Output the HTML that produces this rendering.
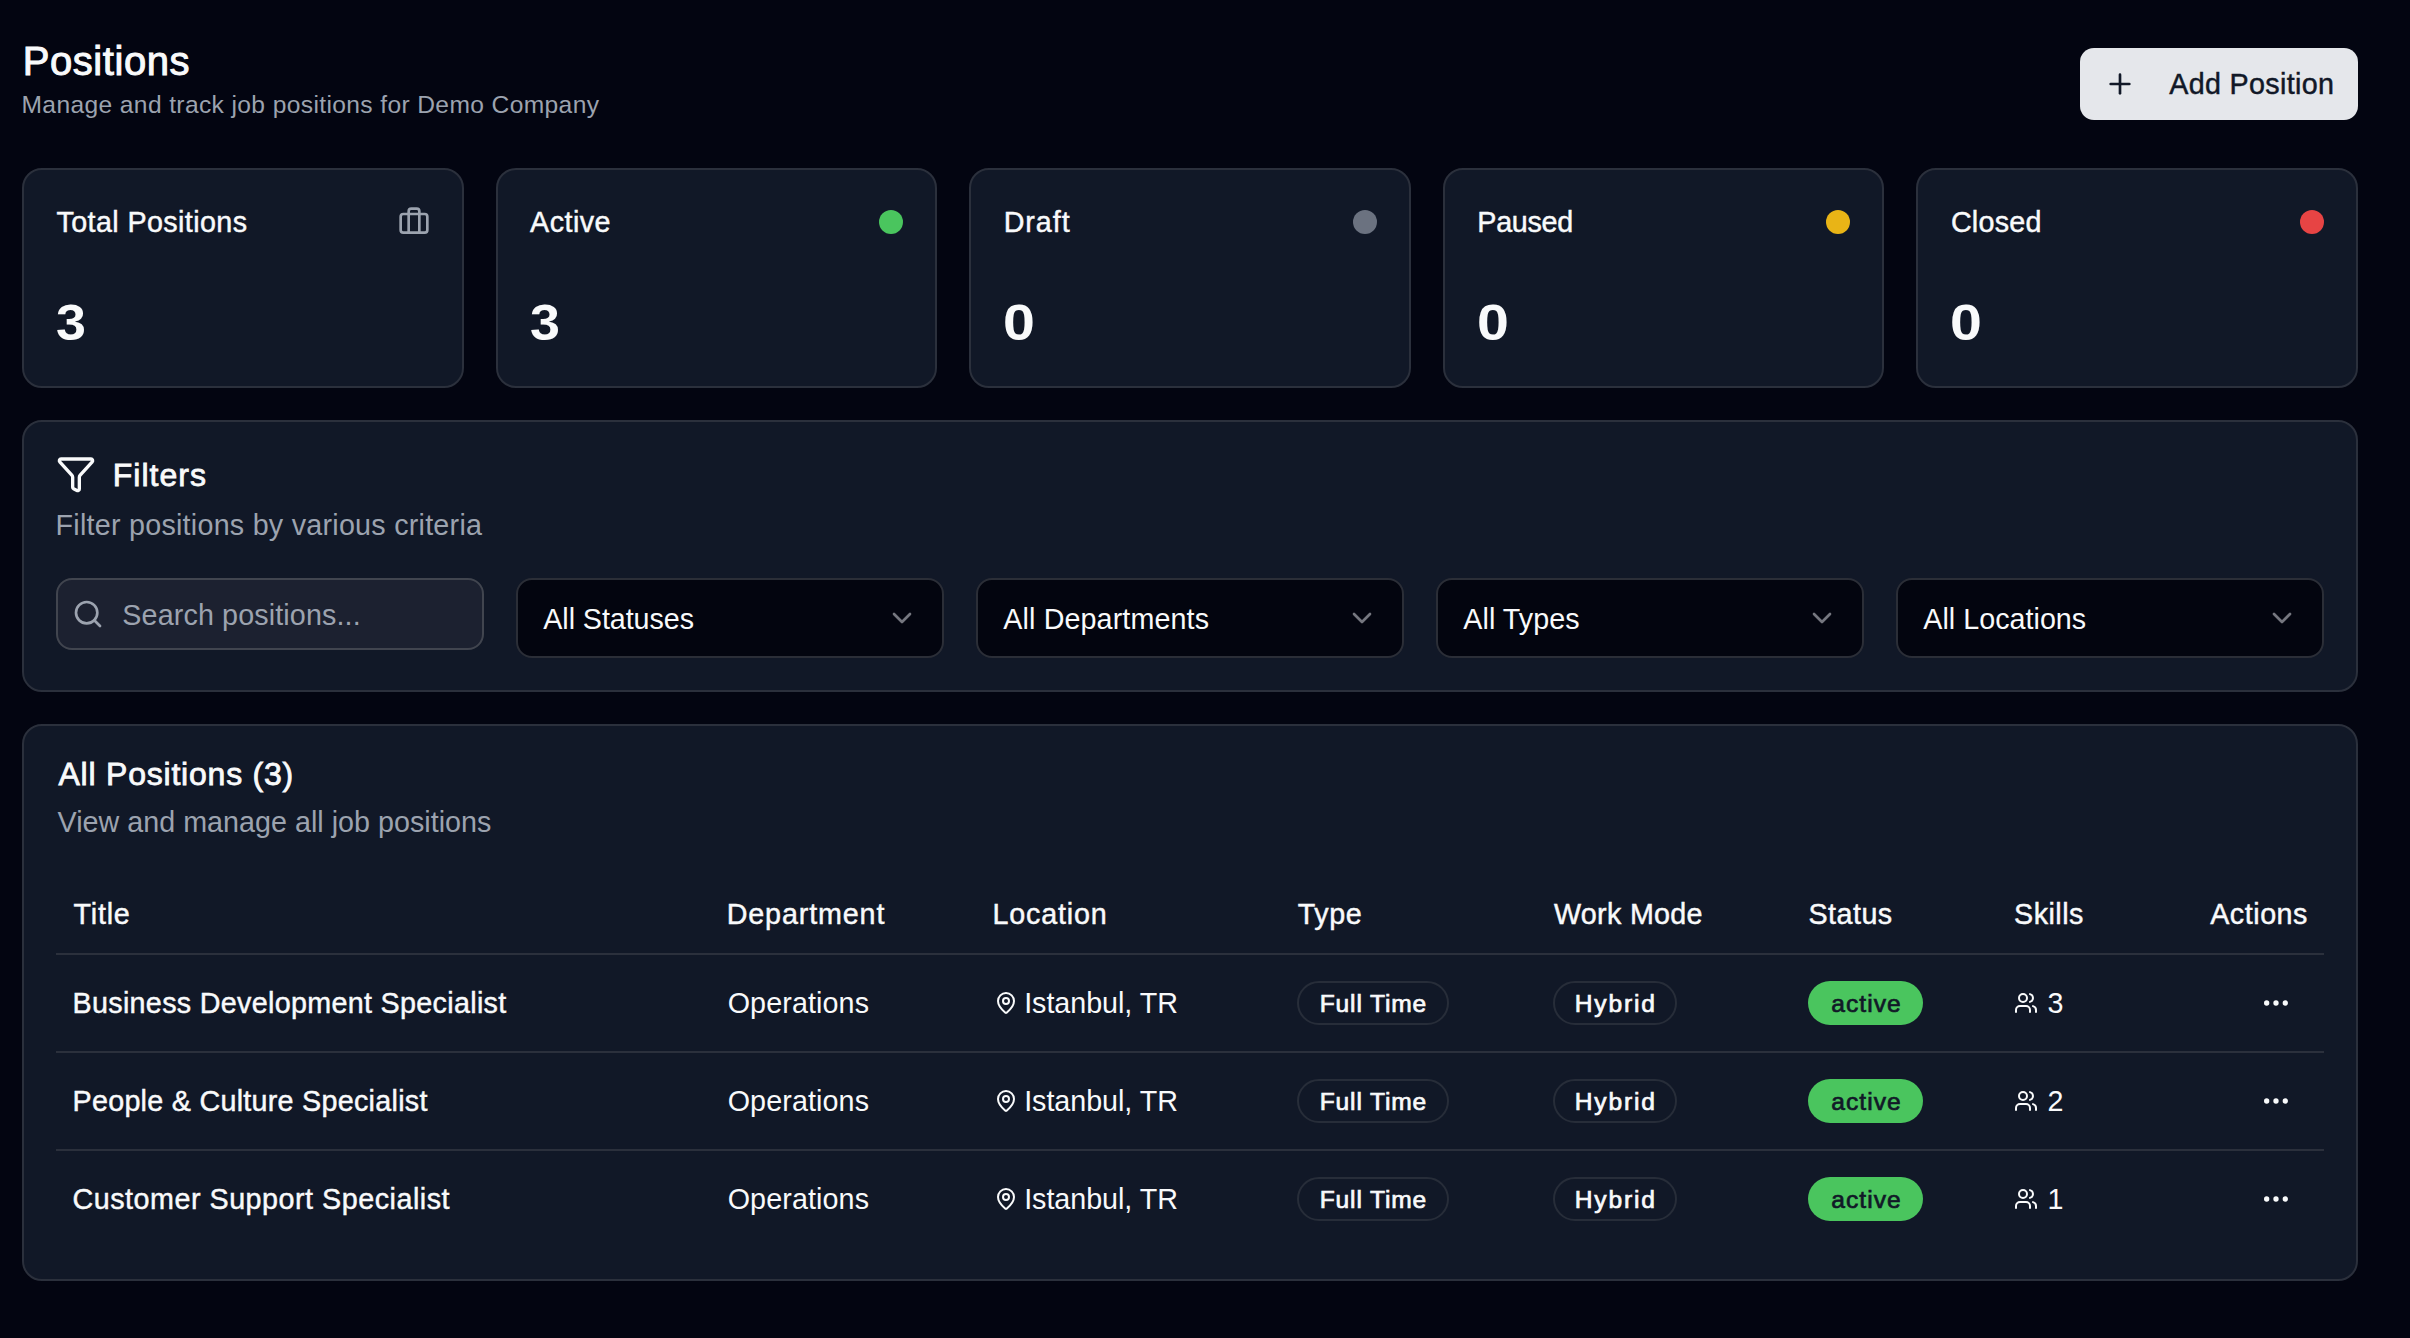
<!DOCTYPE html>
<html><head><meta charset="utf-8"><title>Positions</title>
<style>
html,body{margin:0;padding:0;}
body{width:2410px;height:1338px;background:#030511;position:relative;overflow:hidden;font-family:"Liberation Sans",sans-serif;}
.t{position:absolute;white-space:nowrap;line-height:1;}
svg{display:block;}
</style></head><body>
<div class="t" style="left:22.8px;top:41.1px;font-size:40px;letter-spacing:0.550px;color:#f9fafb;-webkit-text-stroke:1.0px #f9fafb;">Positions</div>
<div class="t" style="left:21.5px;top:93.2px;font-size:24.6px;letter-spacing:0.370px;color:#9ca3af;">Manage and track job positions for Demo Company</div>
<div style="position:absolute;left:2080.0px;top:48.0px;width:278.0px;height:72.0px;box-sizing:border-box;background:#e5e7eb;border-radius:14px;"></div>
<svg style="position:absolute;left:2104.0px;top:68.0px;" width="32" height="32" viewBox="0 0 24 24" fill="none" stroke="#111827" stroke-width="2" stroke-linecap="round" stroke-linejoin="round"><path d="M5 12h14"/><path d="M12 5v14"/></svg>
<div class="t" style="left:2169.2px;top:70.1px;font-size:28.7px;letter-spacing:0.340px;color:#111827;-webkit-text-stroke:0.45px #111827;">Add Position</div>
<div style="position:absolute;left:22.0px;top:168.0px;width:441.6px;height:220.0px;box-sizing:border-box;background:#111827;border:2px solid #2b303c;border-radius:20px;"></div>
<div class="t" style="left:56.5px;top:207.5px;font-size:28.7px;letter-spacing:0.400px;color:#f9fafb;-webkit-text-stroke:0.45px #f9fafb;">Total Positions</div>
<div class="t" style="left:56.0px;top:297.7px;font-size:50.3px;font-weight:700;color:#f9fafb;transform:scaleX(1.07);transform-origin:0 0;">3</div>
<svg style="position:absolute;left:398.0px;top:206.0px;" width="32" height="32" viewBox="0 0 24 24" fill="none" stroke="#9ca3af" stroke-width="2" stroke-linecap="round" stroke-linejoin="round"><path d="M16 20V4a2 2 0 0 0-2-2h-4a2 2 0 0 0-2 2v16"/><rect width="20" height="14" x="2" y="6" rx="2"/></svg>
<div style="position:absolute;left:495.6px;top:168.0px;width:441.6px;height:220.0px;box-sizing:border-box;background:#111827;border:2px solid #2b303c;border-radius:20px;"></div>
<div class="t" style="left:530.1px;top:207.5px;font-size:28.7px;letter-spacing:0.450px;color:#f9fafb;-webkit-text-stroke:0.45px #f9fafb;">Active</div>
<div class="t" style="left:529.6px;top:297.7px;font-size:50.3px;font-weight:700;color:#f9fafb;transform:scaleX(1.07);transform-origin:0 0;">3</div>
<div style="position:absolute;left:879.2px;top:210.0px;width:24.0px;height:24.0px;box-sizing:border-box;background:#4ac55e;border-radius:50%;"></div>
<div style="position:absolute;left:969.2px;top:168.0px;width:441.6px;height:220.0px;box-sizing:border-box;background:#111827;border:2px solid #2b303c;border-radius:20px;"></div>
<div class="t" style="left:1003.7px;top:207.5px;font-size:28.7px;letter-spacing:0.950px;color:#f9fafb;-webkit-text-stroke:0.45px #f9fafb;">Draft</div>
<div class="t" style="left:1003.2px;top:297.7px;font-size:50.3px;font-weight:700;color:#f9fafb;transform:scaleX(1.14);transform-origin:0 0;">0</div>
<div style="position:absolute;left:1352.8px;top:210.0px;width:24.0px;height:24.0px;box-sizing:border-box;background:#6b7280;border-radius:50%;"></div>
<div style="position:absolute;left:1442.8px;top:168.0px;width:441.6px;height:220.0px;box-sizing:border-box;background:#111827;border:2px solid #2b303c;border-radius:20px;"></div>
<div class="t" style="left:1477.3px;top:207.5px;font-size:28.7px;letter-spacing:-0.300px;color:#f9fafb;-webkit-text-stroke:0.45px #f9fafb;">Paused</div>
<div class="t" style="left:1476.8px;top:297.7px;font-size:50.3px;font-weight:700;color:#f9fafb;transform:scaleX(1.14);transform-origin:0 0;">0</div>
<div style="position:absolute;left:1826.4px;top:210.0px;width:24.0px;height:24.0px;box-sizing:border-box;background:#e9b416;border-radius:50%;"></div>
<div style="position:absolute;left:1916.4px;top:168.0px;width:441.6px;height:220.0px;box-sizing:border-box;background:#111827;border:2px solid #2b303c;border-radius:20px;"></div>
<div class="t" style="left:1950.9px;top:207.5px;font-size:28.7px;letter-spacing:0.250px;color:#f9fafb;-webkit-text-stroke:0.45px #f9fafb;">Closed</div>
<div class="t" style="left:1950.4px;top:297.7px;font-size:50.3px;font-weight:700;color:#f9fafb;transform:scaleX(1.14);transform-origin:0 0;">0</div>
<div style="position:absolute;left:2300.0px;top:210.0px;width:24.0px;height:24.0px;box-sizing:border-box;background:#e74444;border-radius:50%;"></div>
<div style="position:absolute;left:22.0px;top:420.0px;width:2336.0px;height:272.0px;box-sizing:border-box;background:#111827;border:2px solid #2b303c;border-radius:20px;"></div>
<svg style="position:absolute;left:56.0px;top:454.0px;" width="40" height="40" viewBox="0 0 24 24" fill="none" stroke="#f9fafb" stroke-width="2" stroke-linecap="round" stroke-linejoin="round"><path d="M10 20a1 1 0 0 0 .553.895l2 1A1 1 0 0 0 14 21v-7a2 2 0 0 1 .517-1.341L21.74 4.67A1 1 0 0 0 21 3H3a1 1 0 0 0-.742 1.67l7.225 7.989A2 2 0 0 1 10 14z"/></svg>
<div class="t" style="left:112.8px;top:458.9px;font-size:32px;letter-spacing:1.000px;color:#f9fafb;-webkit-text-stroke:0.8px #f9fafb;">Filters</div>
<div class="t" style="left:55.5px;top:511.2px;font-size:28.7px;letter-spacing:0.250px;color:#9ca3af;">Filter positions by various criteria</div>
<div style="position:absolute;left:56.0px;top:578.0px;width:428.0px;height:72.0px;box-sizing:border-box;background:#1c2130;border:2px solid #41454f;border-radius:16px;"></div>
<svg style="position:absolute;left:72.0px;top:598.0px;" width="32" height="32" viewBox="0 0 24 24" fill="none" stroke="#9ca3af" stroke-width="2" stroke-linecap="round" stroke-linejoin="round"><circle cx="11" cy="11" r="8"/><path d="m21 21-4.3-4.3"/></svg>
<div class="t" style="left:122.3px;top:600.5px;font-size:28.7px;letter-spacing:0.130px;color:#9ca3af;">Search positions...</div>
<div style="position:absolute;left:516.0px;top:578.0px;width:428.0px;height:80.0px;box-sizing:border-box;background:#03050f;border:2px solid #2b2e37;border-radius:16px;"></div>
<div class="t" style="left:543.3px;top:605.0px;font-size:28.7px;letter-spacing:-0.070px;color:#f9fafb;">All Statuses</div>
<svg style="position:absolute;left:886.0px;top:602.0px;" width="32" height="32" viewBox="0 0 24 24" fill="none" stroke="#75777f" stroke-width="2" stroke-linecap="round" stroke-linejoin="round"><path d="m6 9 6 6 6-6"/></svg>
<div style="position:absolute;left:976.0px;top:578.0px;width:428.0px;height:80.0px;box-sizing:border-box;background:#03050f;border:2px solid #2b2e37;border-radius:16px;"></div>
<div class="t" style="left:1003.3px;top:605.0px;font-size:28.7px;letter-spacing:0.120px;color:#f9fafb;">All Departments</div>
<svg style="position:absolute;left:1346.0px;top:602.0px;" width="32" height="32" viewBox="0 0 24 24" fill="none" stroke="#75777f" stroke-width="2" stroke-linecap="round" stroke-linejoin="round"><path d="m6 9 6 6 6-6"/></svg>
<div style="position:absolute;left:1436.0px;top:578.0px;width:428.0px;height:80.0px;box-sizing:border-box;background:#03050f;border:2px solid #2b2e37;border-radius:16px;"></div>
<div class="t" style="left:1463.3px;top:605.0px;font-size:28.7px;letter-spacing:0.050px;color:#f9fafb;">All Types</div>
<svg style="position:absolute;left:1806.0px;top:602.0px;" width="32" height="32" viewBox="0 0 24 24" fill="none" stroke="#75777f" stroke-width="2" stroke-linecap="round" stroke-linejoin="round"><path d="m6 9 6 6 6-6"/></svg>
<div style="position:absolute;left:1896.0px;top:578.0px;width:428.0px;height:80.0px;box-sizing:border-box;background:#03050f;border:2px solid #2b2e37;border-radius:16px;"></div>
<div class="t" style="left:1923.3px;top:605.0px;font-size:28.7px;letter-spacing:0.020px;color:#f9fafb;">All Locations</div>
<svg style="position:absolute;left:2266.0px;top:602.0px;" width="32" height="32" viewBox="0 0 24 24" fill="none" stroke="#75777f" stroke-width="2" stroke-linecap="round" stroke-linejoin="round"><path d="m6 9 6 6 6-6"/></svg>
<div style="position:absolute;left:22.0px;top:724.0px;width:2336.0px;height:557.0px;box-sizing:border-box;background:#111827;border:2px solid #2b303c;border-radius:20px;"></div>
<div class="t" style="left:58.5px;top:758.4px;font-size:32px;letter-spacing:0.780px;color:#f9fafb;-webkit-text-stroke:0.8px #f9fafb;">All Positions (3)</div>
<div class="t" style="left:57.5px;top:807.9px;font-size:28.7px;letter-spacing:0.020px;color:#9ca3af;">View and manage all job positions</div>
<div class="t" style="left:73.6px;top:899.7px;font-size:28.7px;letter-spacing:0.770px;color:#f9fafb;-webkit-text-stroke:0.45px #f9fafb;">Title</div>
<div class="t" style="left:726.7px;top:899.7px;font-size:28.7px;letter-spacing:0.870px;color:#f9fafb;-webkit-text-stroke:0.45px #f9fafb;">Department</div>
<div class="t" style="left:992.5px;top:899.7px;font-size:28.7px;letter-spacing:0.810px;color:#f9fafb;-webkit-text-stroke:0.45px #f9fafb;">Location</div>
<div class="t" style="left:1297.7px;top:899.7px;font-size:28.7px;letter-spacing:0.600px;color:#f9fafb;-webkit-text-stroke:0.45px #f9fafb;">Type</div>
<div class="t" style="left:1554.0px;top:899.7px;font-size:28.7px;letter-spacing:0.300px;color:#f9fafb;-webkit-text-stroke:0.45px #f9fafb;">Work Mode</div>
<div class="t" style="left:1808.4px;top:899.7px;font-size:28.7px;letter-spacing:0.500px;color:#f9fafb;-webkit-text-stroke:0.45px #f9fafb;">Status</div>
<div class="t" style="left:2014.0px;top:899.7px;font-size:28.7px;letter-spacing:0.500px;color:#f9fafb;-webkit-text-stroke:0.45px #f9fafb;">Skills</div>
<div class="t" style="left:2210.2px;top:899.7px;font-size:28.7px;letter-spacing:0.530px;color:#f9fafb;-webkit-text-stroke:0.45px #f9fafb;">Actions</div>
<div style="position:absolute;left:56.0px;top:953.0px;width:2268.0px;height:2.0px;box-sizing:border-box;background:#2b303c;"></div>
<div style="position:absolute;left:56.0px;top:1051.0px;width:2268.0px;height:2.0px;box-sizing:border-box;background:#2b303c;"></div>
<div class="t" style="left:72.5px;top:988.9px;font-size:28.7px;letter-spacing:0.320px;color:#f9fafb;-webkit-text-stroke:0.45px #f9fafb;">Business Development Specialist</div>
<div class="t" style="left:727.7px;top:988.9px;font-size:28.7px;letter-spacing:0.110px;color:#f9fafb;">Operations</div>
<svg style="position:absolute;left:993.7px;top:991.0px;" width="24" height="24" viewBox="0 0 24 24" fill="none" stroke="#f9fafb" stroke-width="2" stroke-linecap="round" stroke-linejoin="round"><path d="M20 10c0 4.993-5.539 10.193-7.399 11.799a1 1 0 0 1-1.202 0C9.539 20.193 4 14.993 4 10a8 8 0 0 1 16 0"/><circle cx="12" cy="10" r="3"/></svg>
<div class="t" style="left:1024.2px;top:988.9px;font-size:28.7px;letter-spacing:-0.040px;color:#f9fafb;">Istanbul, TR</div>
<div style="position:absolute;left:1297.0px;top:981.0px;width:151.5px;height:44.0px;box-sizing:border-box;border:2px solid #272d39;border-radius:22px;"></div>
<div class="t" style="left:1319.7px;top:991.8px;font-size:24.6px;letter-spacing:0.850px;color:#f9fafb;-webkit-text-stroke:0.7px #f9fafb;">Full Time</div>
<div style="position:absolute;left:1553.0px;top:981.0px;width:123.5px;height:44.0px;box-sizing:border-box;border:2px solid #272d39;border-radius:22px;"></div>
<div class="t" style="left:1574.8px;top:991.8px;font-size:24.6px;letter-spacing:1.800px;color:#f9fafb;-webkit-text-stroke:0.7px #f9fafb;">Hybrid</div>
<div style="position:absolute;left:1808.0px;top:981.0px;width:115.0px;height:44.0px;box-sizing:border-box;background:#4ac55e;border-radius:22px;"></div>
<div class="t" style="left:1831.2px;top:991.8px;font-size:24.6px;letter-spacing:1.050px;color:#111827;-webkit-text-stroke:0.7px #111827;">active</div>
<svg style="position:absolute;left:2013.9px;top:991.0px;" width="24" height="24" viewBox="0 0 24 24" fill="none" stroke="#f9fafb" stroke-width="2" stroke-linecap="round" stroke-linejoin="round"><path d="M16 21v-2a4 4 0 0 0-4-4H6a4 4 0 0 0-4 4v2"/><circle cx="9" cy="7" r="4"/><path d="M22 21v-2a4 4 0 0 0-3-3.87"/><path d="M16 3.13a4 4 0 0 1 0 7.75"/></svg>
<div class="t" style="left:2047.5px;top:988.9px;font-size:28.7px;color:#f9fafb;">3</div>
<svg style="position:absolute;left:2260.0px;top:987.0px;" width="32" height="32" viewBox="0 0 24 24" fill="none" stroke="#f9fafb" stroke-width="2" stroke-linecap="round" stroke-linejoin="round"><circle cx="12" cy="12" r="1"/><circle cx="19" cy="12" r="1"/><circle cx="5" cy="12" r="1"/></svg>
<div style="position:absolute;left:56.0px;top:1149.0px;width:2268.0px;height:2.0px;box-sizing:border-box;background:#2b303c;"></div>
<div class="t" style="left:72.5px;top:1086.9px;font-size:28.7px;letter-spacing:0.280px;color:#f9fafb;-webkit-text-stroke:0.45px #f9fafb;">People &amp; Culture Specialist</div>
<div class="t" style="left:727.7px;top:1086.9px;font-size:28.7px;letter-spacing:0.110px;color:#f9fafb;">Operations</div>
<svg style="position:absolute;left:993.7px;top:1089.0px;" width="24" height="24" viewBox="0 0 24 24" fill="none" stroke="#f9fafb" stroke-width="2" stroke-linecap="round" stroke-linejoin="round"><path d="M20 10c0 4.993-5.539 10.193-7.399 11.799a1 1 0 0 1-1.202 0C9.539 20.193 4 14.993 4 10a8 8 0 0 1 16 0"/><circle cx="12" cy="10" r="3"/></svg>
<div class="t" style="left:1024.2px;top:1086.9px;font-size:28.7px;letter-spacing:-0.040px;color:#f9fafb;">Istanbul, TR</div>
<div style="position:absolute;left:1297.0px;top:1079.0px;width:151.5px;height:44.0px;box-sizing:border-box;border:2px solid #272d39;border-radius:22px;"></div>
<div class="t" style="left:1319.7px;top:1089.8px;font-size:24.6px;letter-spacing:0.850px;color:#f9fafb;-webkit-text-stroke:0.7px #f9fafb;">Full Time</div>
<div style="position:absolute;left:1553.0px;top:1079.0px;width:123.5px;height:44.0px;box-sizing:border-box;border:2px solid #272d39;border-radius:22px;"></div>
<div class="t" style="left:1574.8px;top:1089.8px;font-size:24.6px;letter-spacing:1.800px;color:#f9fafb;-webkit-text-stroke:0.7px #f9fafb;">Hybrid</div>
<div style="position:absolute;left:1808.0px;top:1079.0px;width:115.0px;height:44.0px;box-sizing:border-box;background:#4ac55e;border-radius:22px;"></div>
<div class="t" style="left:1831.2px;top:1089.8px;font-size:24.6px;letter-spacing:1.050px;color:#111827;-webkit-text-stroke:0.7px #111827;">active</div>
<svg style="position:absolute;left:2013.9px;top:1089.0px;" width="24" height="24" viewBox="0 0 24 24" fill="none" stroke="#f9fafb" stroke-width="2" stroke-linecap="round" stroke-linejoin="round"><path d="M16 21v-2a4 4 0 0 0-4-4H6a4 4 0 0 0-4 4v2"/><circle cx="9" cy="7" r="4"/><path d="M22 21v-2a4 4 0 0 0-3-3.87"/><path d="M16 3.13a4 4 0 0 1 0 7.75"/></svg>
<div class="t" style="left:2047.5px;top:1086.9px;font-size:28.7px;color:#f9fafb;">2</div>
<svg style="position:absolute;left:2260.0px;top:1085.0px;" width="32" height="32" viewBox="0 0 24 24" fill="none" stroke="#f9fafb" stroke-width="2" stroke-linecap="round" stroke-linejoin="round"><circle cx="12" cy="12" r="1"/><circle cx="19" cy="12" r="1"/><circle cx="5" cy="12" r="1"/></svg>
<div class="t" style="left:72.5px;top:1184.9px;font-size:28.7px;letter-spacing:0.520px;color:#f9fafb;-webkit-text-stroke:0.45px #f9fafb;">Customer Support Specialist</div>
<div class="t" style="left:727.7px;top:1184.9px;font-size:28.7px;letter-spacing:0.110px;color:#f9fafb;">Operations</div>
<svg style="position:absolute;left:993.7px;top:1187.0px;" width="24" height="24" viewBox="0 0 24 24" fill="none" stroke="#f9fafb" stroke-width="2" stroke-linecap="round" stroke-linejoin="round"><path d="M20 10c0 4.993-5.539 10.193-7.399 11.799a1 1 0 0 1-1.202 0C9.539 20.193 4 14.993 4 10a8 8 0 0 1 16 0"/><circle cx="12" cy="10" r="3"/></svg>
<div class="t" style="left:1024.2px;top:1184.9px;font-size:28.7px;letter-spacing:-0.040px;color:#f9fafb;">Istanbul, TR</div>
<div style="position:absolute;left:1297.0px;top:1177.0px;width:151.5px;height:44.0px;box-sizing:border-box;border:2px solid #272d39;border-radius:22px;"></div>
<div class="t" style="left:1319.7px;top:1187.8px;font-size:24.6px;letter-spacing:0.850px;color:#f9fafb;-webkit-text-stroke:0.7px #f9fafb;">Full Time</div>
<div style="position:absolute;left:1553.0px;top:1177.0px;width:123.5px;height:44.0px;box-sizing:border-box;border:2px solid #272d39;border-radius:22px;"></div>
<div class="t" style="left:1574.8px;top:1187.8px;font-size:24.6px;letter-spacing:1.800px;color:#f9fafb;-webkit-text-stroke:0.7px #f9fafb;">Hybrid</div>
<div style="position:absolute;left:1808.0px;top:1177.0px;width:115.0px;height:44.0px;box-sizing:border-box;background:#4ac55e;border-radius:22px;"></div>
<div class="t" style="left:1831.2px;top:1187.8px;font-size:24.6px;letter-spacing:1.050px;color:#111827;-webkit-text-stroke:0.7px #111827;">active</div>
<svg style="position:absolute;left:2013.9px;top:1187.0px;" width="24" height="24" viewBox="0 0 24 24" fill="none" stroke="#f9fafb" stroke-width="2" stroke-linecap="round" stroke-linejoin="round"><path d="M16 21v-2a4 4 0 0 0-4-4H6a4 4 0 0 0-4 4v2"/><circle cx="9" cy="7" r="4"/><path d="M22 21v-2a4 4 0 0 0-3-3.87"/><path d="M16 3.13a4 4 0 0 1 0 7.75"/></svg>
<div class="t" style="left:2047.5px;top:1184.9px;font-size:28.7px;color:#f9fafb;">1</div>
<svg style="position:absolute;left:2260.0px;top:1183.0px;" width="32" height="32" viewBox="0 0 24 24" fill="none" stroke="#f9fafb" stroke-width="2" stroke-linecap="round" stroke-linejoin="round"><circle cx="12" cy="12" r="1"/><circle cx="19" cy="12" r="1"/><circle cx="5" cy="12" r="1"/></svg>
<script>(function(){var w=window.innerWidth;if(w&&Math.abs(w-2410)>2){document.documentElement.style.zoom=(w/2410);}})();</script>
</body></html>
